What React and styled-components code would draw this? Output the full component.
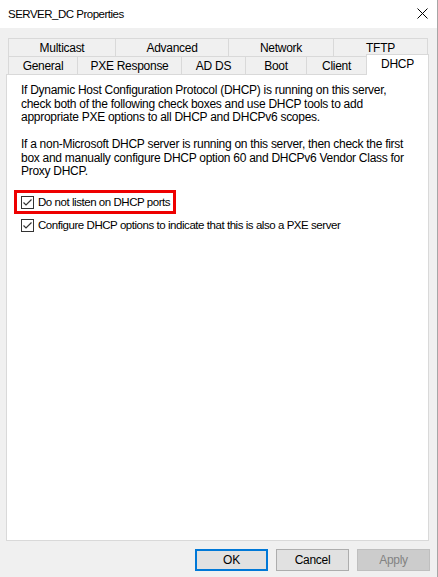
import React from 'react'
import styled, { createGlobalStyle } from 'styled-components'

const GlobalStyle = createGlobalStyle`
  body {
    margin: 0;
    background: #f0f0f0;
    font-family: "Liberation Sans", Arial, sans-serif;
    color: #000;
  }
`

const topTabs = [
  { label: 'Multicast', w: 108 },
  { label: 'Advanced', w: 114 },
  { label: 'Network', w: 106 },
  { label: 'TFTP', w: 95 },
]

const bottomTabs = [
  { label: 'General', w: 70 },
  { label: 'PXE Response', w: 105 },
  { label: 'AD DS', w: 65 },
  { label: 'Boot', w: 62 },
  { label: 'Client', w: 61 },
  { label: 'DHCP', w: 63, active: true },
]

function CheckBox() {
  return (
    <svg width="13" height="13" viewBox="0 0 13 13">
      <rect x="0.5" y="0.5" width="12" height="12" fill="#fff" stroke="#333" />
      <path d="M2.5 6.5 L5 9 L10.5 3.5" fill="none" stroke="#333" strokeWidth="1.2" />
    </svg>
  )
}

function App() {
  return (
    <Window>
      <GlobalStyle />
      <TitleBar>
        <Title>SERVER_DC Properties</Title>
        <svg width="11" height="11" viewBox="0 0 11 11">
          <path d="M0.5 0.5 L10.5 10.5 M10.5 0.5 L0.5 10.5" stroke="#000" strokeWidth="1" />
        </svg>
      </TitleBar>
      <Content>
        <TabStrip>
          <TabRow>
            {topTabs.map(t => (
              <Tab key={t.label} $w={t.w}>{t.label}</Tab>
            ))}
          </TabRow>
          <TabRow>
            {bottomTabs.map(t => (
              <Tab key={t.label} $w={t.w} $active={t.active}>{t.label}</Tab>
            ))}
          </TabRow>
        </TabStrip>
        <Panel>
          <Para>
            If Dynamic Host Configuration Protocol (DHCP) is running on this server,
            <br />check both of the following check boxes and use DHCP tools to add
            <br />appropriate PXE options to all DHCP and DHCPv6 scopes.
          </Para>
          <Para>
            If a non-Microsoft DHCP server is running on this server, then check the first
            <br />box and manually configure DHCP option 60 and DHCPv6 Vendor Class for
            <br />Proxy DHCP.
          </Para>
          <Checks>
            <CheckRow $highlight>
              <CheckBox />
              <span>Do not listen on DHCP ports</span>
            </CheckRow>
            <CheckRow>
              <CheckBox />
              <span>Configure DHCP options to indicate that this is also a PXE server</span>
            </CheckRow>
          </Checks>
        </Panel>
        <ButtonRow>
          <Button $variant="default">OK</Button>
          <Button>Cancel</Button>
          <Button $variant="disabled">Apply</Button>
        </ButtonRow>
      </Content>
    </Window>
  )
}

const Window = styled.div`
  width: 438px;
  height: 577px;
  box-sizing: border-box;
  border-right: 1px solid #a6a6a6;
  background: #f0f0f0;
  display: flex;
  flex-direction: column;
  overflow: hidden;
  letter-spacing: -0.28px;
`

const TitleBar = styled.div`
  height: 27px;
  flex-shrink: 0;
  background: #fff;
  display: flex;
  align-items: center;
  justify-content: space-between;
  padding: 0 9px 1px 8px;
`

const Title = styled.div`
  font-size: 11.5px;
  letter-spacing: -0.5px;
`

const Content = styled.div`
  display: flex;
  flex-direction: column;
  padding: 10px 0 0 6px;
`

const TabStrip = styled.div`
  margin-left: 2px;
  display: flex;
  flex-direction: column;
`

const TabRow = styled.div`
  display: flex;
  align-items: flex-end;
  height: 18px;
`

const Tab = styled.div`
  box-sizing: border-box;
  width: ${p => p.$w}px;
  height: ${p => (p.$active ? 21 : 18)}px;
  margin-right: -1px;
  margin-bottom: ${p => (p.$active ? -1 : 0)}px;
  border: 1px solid #d9d9d9;
  border-bottom: none;
  background: ${p => (p.$active ? '#fff' : '#f0f0f0')};
  position: relative;
  z-index: ${p => (p.$active ? 2 : 0)};
  display: flex;
  justify-content: center;
  align-items: ${p => (p.$active ? 'flex-start' : 'center')};
  padding-top: ${p => (p.$active ? 2 : 0)}px;
  font-size: 12px;
  line-height: 14px;
`

const Panel = styled.div`
  box-sizing: border-box;
  width: 423px;
  height: 467px;
  background: #fff;
  border: 1px solid #d9d9d9;
  position: relative;
  z-index: 1;
  padding: 9px 10px 0 14px;
  white-space: nowrap;
`

const Para = styled.p`
  margin: 0 0 13.5px;
  font-size: 12px;
  line-height: 13.5px;
`

const Checks = styled.div`
  display: flex;
  flex-direction: column;
  gap: 10px;
  padding-top: 4px;
`

const CheckRow = styled.div`
  display: flex;
  align-items: center;
  gap: 4px;
  font-size: 11.5px;
  letter-spacing: -0.45px;
  line-height: 13px;
  position: relative;
  align-self: flex-start;

  svg {
    flex-shrink: 0;
  }

  &::before {
    content: '';
    display: ${p => (p.$highlight ? 'block' : 'none')};
    position: absolute;
    left: -7px;
    right: -6px;
    top: -6px;
    bottom: -5px;
    border: 3px solid #ee0000;
  }
`

const Button = styled.button`
  box-sizing: border-box;
  width: 73px;
  height: 22px;
  font-family: inherit;
  font-size: 12px;
  letter-spacing: inherit;
  padding: 0;
  background: ${p => (p.$variant === 'disabled' ? '#cccccc' : '#e1e1e1')};
  color: ${p => (p.$variant === 'disabled' ? '#838383' : '#000')};
  border: ${p =>
    p.$variant === 'default'
      ? '2px solid #0078d7'
      : p.$variant === 'disabled'
      ? '1px solid #bfbfbf'
      : '1px solid #adadad'};
`

const ButtonRow = styled.div`
  display: flex;
  justify-content: flex-end;
  gap: 8px;
  margin-top: 8px;
  padding-right: 7px;
`

export default App
